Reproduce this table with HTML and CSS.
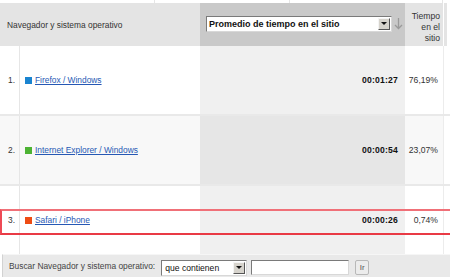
FILE: index.html
```html
<!DOCTYPE html>
<html lang="es">
<head>
<meta charset="utf-8">
<title>Navegador y sistema operativo</title>
<link rel="stylesheet" href="styles.css">
</head>
<body>
<div class="report">
  <div class="topstrip">
    <span class="ts a"></span><span class="ts b"></span><span class="ts c"></span><span class="ts d"></span>
  </div>
  <div class="grid thead">
    <div class="h-dim">Navegador y sistema operativo</div>
    <div class="h-metric">
      <div class="select big"><span class="sel-text">Promedio de tiempo en el sitio</span><span class="sel-btn"><i></i></span></div>
      <svg class="sort" width="9" height="13" viewBox="0 0 9 13" aria-label="orden descendente"><path d="M4.5 1V11.5M1 8L4.5 11.5L8 8" fill="none" stroke="#9a9a9a" stroke-width="1.3"/></svg>
    </div>
    <div class="h-pct">Tiempo<br>en el<br>sitio</div>
    <div class="h-edge"></div>
  </div>
  <div class="grid row">
    <div class="num">1.</div>
    <div class="name"><span class="sw blue"></span><a href="#">Firefox / Windows</a></div>
    <div class="metric">00:01:27</div>
    <div class="pct">76,19%</div>
    <div class="edge"></div>
  </div>
  <div class="grid row alt">
    <div class="num">2.</div>
    <div class="name"><span class="sw green"></span><a href="#">Internet Explorer / Windows</a></div>
    <div class="metric">00:00:54</div>
    <div class="pct">23,07%</div>
    <div class="edge"></div>
  </div>
  <div class="grid row last">
    <div class="num">3.</div>
    <div class="name"><span class="sw orange"></span><a href="#">Safari / iPhone</a></div>
    <div class="metric">00:00:26</div>
    <div class="pct">0,74%</div>
    <div class="edge"></div>
  </div>
  <div class="search">
    <span class="label">Buscar Navegador y sistema operativo:</span>
    <div class="select small"><span class="sel-text">que contienen</span><span class="sel-btn"><i></i></span></div>
    <span class="input"></span>
    <span class="btn">Ir</span>
  </div>
  <div class="highlight"></div>
</div>
</body>
</html>
```

FILE: styles.css
```css
* { box-sizing: border-box; }
html, body { margin: 0; padding: 0; background: #fff; }
body { font-family: "Liberation Sans", Arial, sans-serif; font-size: 8.4px; color: #333; }

.report { position: relative; width: 450px; height: 277px; overflow: hidden; }

.topstrip { display: flex; height: 3px; }
.ts { display: block; height: 3px; }
.ts.a { width: 155px; border-right: 1px solid #e6e6e6; }
.ts.b { width: 135px; border-right: 1px solid #e6e6e6; }
.ts.c { width: 153px; border-right: 1px solid #e6e6e6; }
.ts.d { flex: 1; }

.grid { display: grid; grid-template-columns: 20px 180px 205px 38px 7px; }

.thead { height: 43px; }
.h-dim { grid-column: 1 / 3; background: #e4e4e4; display: flex; align-items: center; padding-left: 7px; padding-top: 1px; color: #333; }
.h-metric { background: #c9c9c9; display: flex; align-items: center; padding-left: 6px; padding-bottom: 2px; }
.h-pct { background: #e4e4e4; text-align: right; padding: 8px 3px 0 0; line-height: 11px; font-size: 8.6px; color: #333; }
.h-edge { background: linear-gradient(to right, #fff 0 1px, #e4e4e4 1px 4px, #fff 4px); }

.select { display: flex; align-items: center; background: #fff; border: 1px solid; border-color: #7a7a7a #d8d8d8 #d8d8d8 #7a7a7a; }
.select.big { width: 186px; height: 16px; }
.select .sel-text { flex: 1; padding-left: 2px; white-space: nowrap; overflow: hidden; }
.select.big .sel-text { font-weight: bold; font-size: 9px; color: #111; }
.sel-btn { width: 12px; height: 12px; margin-right: 1px; background: #d6d3cc; border: 1px solid; border-color: #f4f4f4 #555 #555 #f4f4f4; display: flex; align-items: center; justify-content: center; }
.sel-btn i { display: block; width: 0; height: 0; border-left: 3px solid transparent; border-right: 3px solid transparent; border-top: 3px solid #111; }
.sort { display: block; margin-left: 2px; }

.row { height: 70px; border-bottom: 2px solid #e9e9e9; }
.row > div { display: flex; align-items: center; }
.row.last { height: 68px; border-bottom: 0; }
.num { padding-left: 8px; border-right: 1px solid #e6e6e6; background: #fff; }
.name { padding-left: 5px; background: #fff; }
.metric { background: #f0f0f0; justify-content: flex-end; padding-right: 7px; font-weight: bold; font-size: 8.6px; color: #111; letter-spacing: 0.2px; }
.pct { background: #fff; justify-content: flex-end; padding-right: 5px; font-size: 8.6px; }
.edge { background: #fff; border-left: 1px solid #ececec; }
.row.alt .num, .row.alt .name, .row.alt .pct { background: #f8f8f8; }
.row.alt .metric { background: #e6e6e6; }

.sw { display: inline-block; width: 7px; height: 7px; margin-right: 3px; }
.sw.blue { background: #1a84d0; }
.sw.green { background: #4db334; }
.sw.orange { background: #ee4c14; }
a { color: #2658b4; text-decoration: underline; }

.search { height: 23px; background: #e9e9e9; border-top: 1px solid #f6f6f6; border-left: 1px solid #d2d2d2; margin-left: 2px; display: flex; align-items: center; padding-left: 6px; color: #444; }
.label { margin-right: 6px; }
.select.small { width: 86px; height: 16px; margin-top: 3px; }
.select.small .sel-text { color: #111; padding-left: 3px; font-size: 8.6px; }
.input { display: block; width: 98px; height: 15px; margin-left: 4px; margin-top: 3px; background: #fff; border: 1px solid; border-color: #7a7a7a #d8d8d8 #d8d8d8 #7a7a7a; }
.btn { display: flex; align-items: center; justify-content: center; width: 14px; height: 15px; margin-left: 6px; margin-top: 3px; background: #ececec; border: 1px solid #b8b8b8; border-radius: 2px; font-size: 8px; color: #555; }

.highlight { position: absolute; left: 0; top: 209px; width: 460px; height: 26px; border-top: 2px solid #f07078; border-bottom: 2px solid #e93a45; border-left: 2px solid #ee4a55; pointer-events: none; }
```
